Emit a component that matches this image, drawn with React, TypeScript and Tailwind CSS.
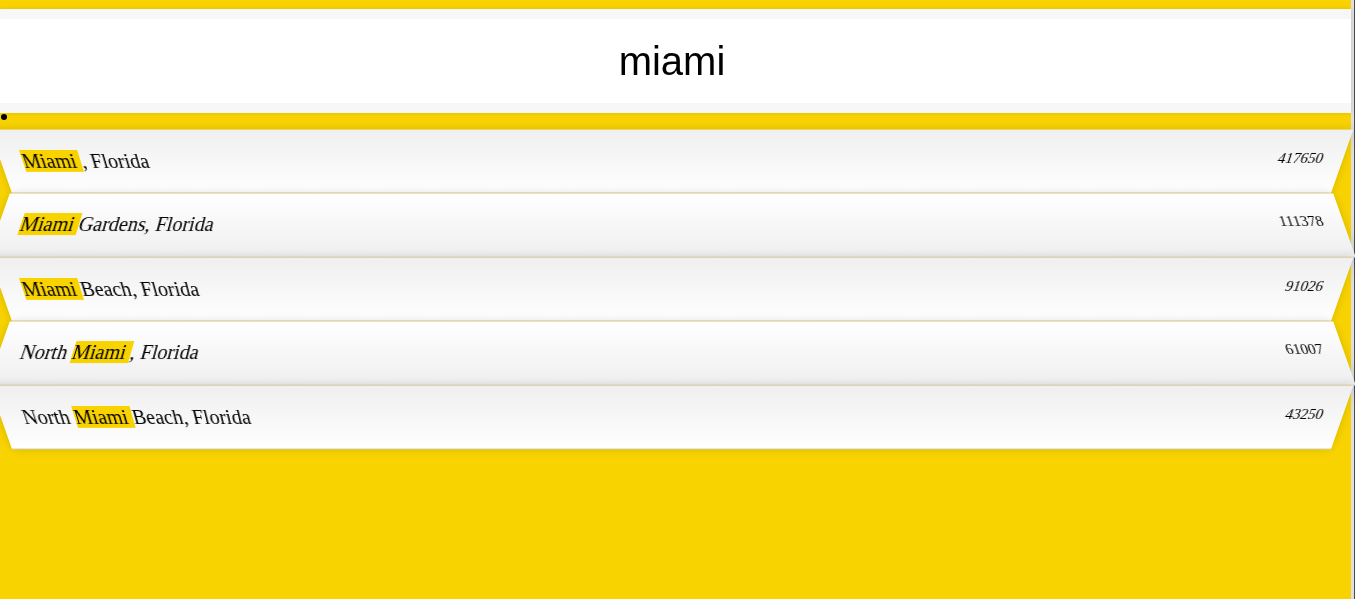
import React from "react";

type City = {
  before: string;
  match: string;
  after: string;
  population: string;
};

const cities: City[] = [
  { before: "", match: "Miami ", after: ", Florida", population: "417650" },
  { before: "", match: "Miami ", after: "Gardens, Florida", population: "111378" },
  { before: "", match: "Miami ", after: "Beach, Florida", population: "91026" },
  { before: "North ", match: "Miami ", after: ", Florida", population: "61007" },
  { before: "North ", match: "Miami ", after: "Beach, Florida", population: "43250" },
];

export default function App() {
  return (
    <div className="flex min-h-screen w-full bg-[#f9d300]">
      <main className="min-w-0 flex-1 pt-[9px]">
        {/* search box, wider than the list so its side borders are off screen */}
        <div className="relative z-[2] flex h-[104px] items-center justify-center border-y-[10px] border-[#f7f7f7] bg-white pr-[7px] shadow-[0_0_5px_rgba(0,0,0,0.12)]">
          <span className="font-['Liberation_Sans',Arial,sans-serif] text-[40px] leading-none text-black">miami</span>
        </div>

        <div className="relative h-[14px]">
          <span className="absolute left-[1px] top-[1px] h-[6px] w-[6px] rounded-full bg-black" />
        </div>

        <ul className="relative m-0 mr-[8px] p-0 font-['Liberation_Serif','Times_New_Roman',serif] text-black">
          {cities.map((c, i) => (
            <li
              key={i}
              className={
                i % 2 === 0
                  ? "flex list-none justify-between border-b border-[#d8d8d8] bg-[linear-gradient(to_top,#ffffff_0%,#efefef_100%)] py-5 pl-[22px] pr-5 text-[20px] leading-[23px] shadow-[0_0_10px_rgba(0,0,0,0.14)] [transform:perspective(100px)_rotateX(-3deg)_translateY(3px)]"
                  : "flex list-none justify-between border-b border-[#d8d8d8] bg-[linear-gradient(to_bottom,#ffffff_0%,#efefef_100%)] py-5 pl-[22px] pr-5 text-[20px] leading-[23px] shadow-[0_0_10px_rgba(0,0,0,0.14)] [transform:perspective(100px)_rotateX(3deg)_translateY(2px)_scale(1.001)]"
              }
            >
              <span className="whitespace-pre">
                {c.before}
                <span className="bg-[#f9d300]">{c.match}</span>
                {c.after}
              </span>
              <span className="text-[15px] leading-[17px]">{c.population}</span>
            </li>
          ))}
        </ul>
      </main>
      <div className="w-[4px] shrink-0 border-r border-[#4a4a4a] bg-[#dedee2]" />
    </div>
  );
}
